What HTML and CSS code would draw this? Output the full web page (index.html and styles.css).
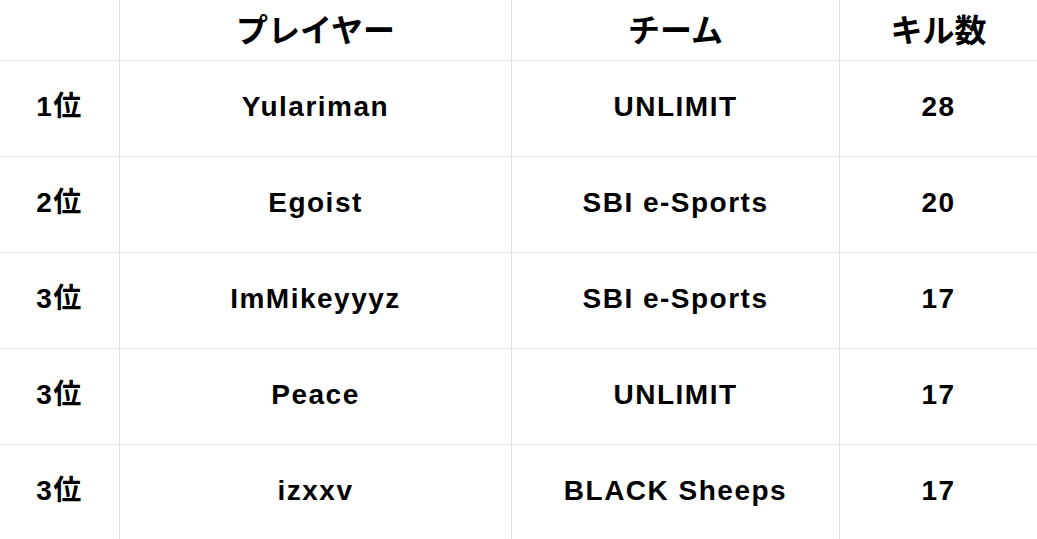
FILE: index.html
```html
<!DOCTYPE html>
<html lang="ja">
<head>
<meta charset="utf-8">
<link rel="stylesheet" href="styles.css">
</head>
<body>
<div class="grid">
  <div class="cell head"></div>
  <div class="cell head">プレイヤー</div>
  <div class="cell head">チーム</div>
  <div class="cell head">キル数</div>

  <div class="cell">1位</div>
  <div class="cell">Yulariman</div>
  <div class="cell">UNLIMIT</div>
  <div class="cell">28</div>

  <div class="cell">2位</div>
  <div class="cell">Egoist</div>
  <div class="cell">SBI e-Sports</div>
  <div class="cell">20</div>

  <div class="cell">3位</div>
  <div class="cell">ImMikeyyyz</div>
  <div class="cell">SBI e-Sports</div>
  <div class="cell">17</div>

  <div class="cell">3位</div>
  <div class="cell">Peace</div>
  <div class="cell">UNLIMIT</div>
  <div class="cell">17</div>

  <div class="cell">3位</div>
  <div class="cell">izxxv</div>
  <div class="cell">BLACK Sheeps</div>
  <div class="cell">17</div>
</div>
</body>
</html>
```
FILE: styles.css
```css
html, body {
  margin: 0;
  padding: 0;
  background: #fff;
}
body {
  font-family: "Liberation Sans", "Noto Sans CJK JP", sans-serif;
  font-weight: 700;
  color: #000;
}
.grid {
  display: grid;
  grid-template-columns: 119px 391px 327px 197px;
  grid-template-rows: 60px repeat(5, 95px);
  gap: 1px;
  background: #e0e0e0;
  width: 1037px;
  overflow: hidden;
}
.cell {
  background: #fff;
  display: flex;
  align-items: center;
  justify-content: center;
  font-size: 28px;
  letter-spacing: 1.5px;
  line-height: 1;
  padding-bottom: 3px;
  box-sizing: border-box;
}
.head {
  font-family: "Noto Sans CJK JP", sans-serif;
  font-size: 32px;
  letter-spacing: 0;
  padding-bottom: 4px;
}
```
